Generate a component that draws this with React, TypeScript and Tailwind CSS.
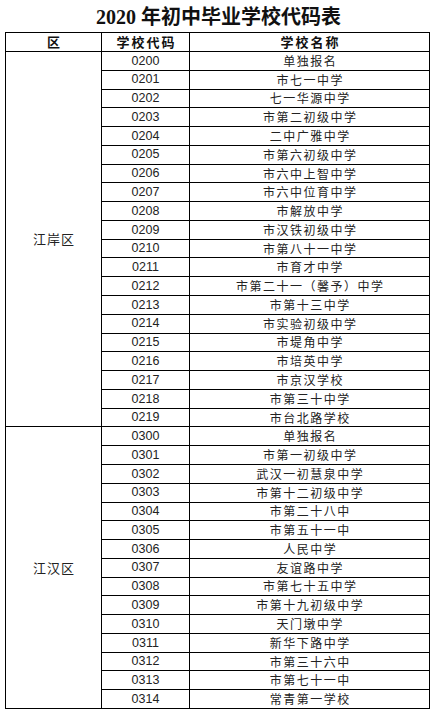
const cjk = "font-['Noto_Sans_CJK_SC',sans-serif]";

const districts = [
  {
    name: "江岸区",
    schools: [
      ["0200", "单独报名"],
      ["0201", "市七一中学"],
      ["0202", "七一华源中学"],
      ["0203", "市第二初级中学"],
      ["0204", "二中广雅中学"],
      ["0205", "市第六初级中学"],
      ["0206", "市六中上智中学"],
      ["0207", "市六中位育中学"],
      ["0208", "市解放中学"],
      ["0209", "市汉铁初级中学"],
      ["0210", "市第八十一中学"],
      ["0211", "市育才中学"],
      ["0212", "市第二十一（馨予）中学"],
      ["0213", "市第十三中学"],
      ["0214", "市实验初级中学"],
      ["0215", "市堤角中学"],
      ["0216", "市培英中学"],
      ["0217", "市京汉学校"],
      ["0218", "市第三十中学"],
      ["0219", "市台北路学校"],
    ],
  },
  {
    name: "江汉区",
    schools: [
      ["0300", "单独报名"],
      ["0301", "市第一初级中学"],
      ["0302", "武汉一初慧泉中学"],
      ["0303", "市第十二初级中学"],
      ["0304", "市第二十八中"],
      ["0305", "市第五十一中"],
      ["0306", "人民中学"],
      ["0307", "友谊路中学"],
      ["0308", "市第七十五中学"],
      ["0309", "市第十九初级中学"],
      ["0310", "天门墩中学"],
      ["0311", "新华下路中学"],
      ["0312", "市第三十六中"],
      ["0313", "市第七十一中"],
      ["0314", "常青第一学校"],
    ],
  },
];

export default function App() {
  return (
    <div className="w-[437px] h-[712px] bg-white text-[#222]">
      <h1 className="h-[32px] flex items-center justify-center pt-[1px] text-[20px] font-bold font-['Liberation_Serif','Noto_Sans_CJK_SC',serif] text-[#111]">
        2020 年初中毕业学校代码表
      </h1>

      <div className="ml-[5px] w-[425px] h-[677px] bg-black p-px gap-px grid grid-cols-[95px_87px_1fr] grid-rows-[18px_repeat(35,minmax(0,1fr))]">
        <div className={`bg-white flex items-center justify-center text-[13px] font-bold text-[#111] ${cjk}`}>区</div>
        <div className={`bg-white flex items-center justify-center text-[13px] font-bold text-[#111] tracking-[2px] pl-[2px] ${cjk}`}>学校代码</div>
        <div className={`bg-white flex items-center justify-center text-[13px] font-bold text-[#111] tracking-[2px] pl-[2px] ${cjk}`}>学校名称</div>

        {districts.map((d) => (
          <>
            <div
              key={d.name}
              className={`bg-white flex items-center justify-center text-[13px] tracking-[1px] pl-px ${cjk} ${d.schools.length === 20 ? "row-span-20" : "row-span-15"}`}
            >
              {d.name}
            </div>
            {d.schools.map(([code, school]) => (
              <>
                <div key={code} className="bg-white flex items-center justify-center text-[12.5px] font-['Liberation_Sans',sans-serif] leading-none">
                  {code}
                </div>
                <div key={code + "n"} className={`bg-white flex items-center justify-center text-[12px] tracking-[1.5px] pl-[1.5px] leading-none ${cjk}`}>
                  {school}
                </div>
              </>
            ))}
          </>
        ))}
      </div>
    </div>
  );
}
